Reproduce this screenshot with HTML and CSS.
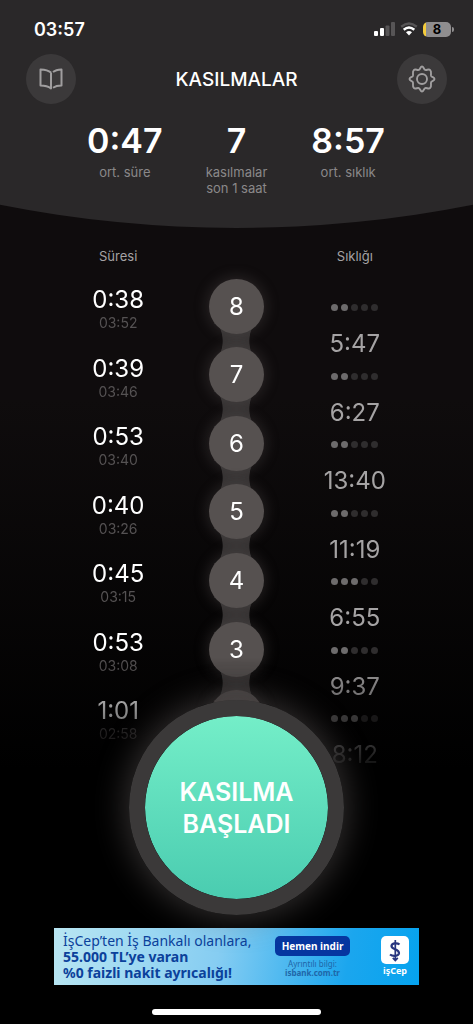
FILE: index.html
```
<!DOCTYPE html>
<html lang="tr">
<head>
<meta charset="utf-8">
<meta name="viewport" content="width=device-width, initial-scale=1">
<title>Kasılmalar</title>
<link rel="stylesheet" href="styles.css">
</head>
<body>
<div class="app">
  <header class="header">
    <div class="status">
      <time class="clock">03:57</time>
      <div class="status-icons">
        <svg class="signal" viewBox="0 0 21 14" aria-hidden="true">
          <rect x="0" y="9" width="4" height="5" rx="1" fill="#fff"/>
          <rect x="6" y="6" width="4" height="8" rx="1" fill="#fff"/>
          <rect x="11.500" y="3.500" width="4" height="10.500" rx="1" fill="#575556"/>
          <rect x="17" y="0" width="4" height="14" rx="1" fill="#575556"/>
        </svg>
        <svg class="wifi" viewBox="0 0 18 14" aria-hidden="true">
          <path d="M1.200 4.800Q9-1.600 16.800 4.800" fill="none" stroke="#575556" stroke-width="2.400"/>
          <path d="M3.700 7.700Q9 3.300 14.300 7.700" fill="none" stroke="#fff" stroke-width="2.500"/>
          <path d="M6 10.200Q9 7.800 12 10.200L9 13.400Z" fill="#fff"/>
        </svg>
        <div class="battery"><span class="battery-body">8</span><span class="battery-tip"></span></div>
      </div>
    </div>
    <div class="titlebar">
      <button class="round" aria-label="Rehber">
        <svg class="book" viewBox="0 0 24 22" fill="none" stroke="#a09e9f" stroke-width="2" stroke-linejoin="round" aria-hidden="true">
          <path d="M12 4.500C9.500 2.500 6 1.700 1.500 1.500V17.500C6 17.500 9.500 18.500 12 20.500V4.500"/>
          <path d="M14 4C16 2.400 19 1.700 22.500 1.500V17.500C19 17.500 16.500 18 14 19.800"/>
        </svg>
      </button>
      <h1 class="title">KASILMALAR</h1>
      <button class="round" aria-label="Ayarlar">
        <svg class="gear" viewBox="0 0 28 28" fill="none" stroke="#a09e9f" stroke-width="1.900" stroke-linejoin="round" aria-hidden="true">
          <path d="M14 1.500C15.600 1.500 15.800 4.300 17.200 4.900C18.700 5.500 20.800 3.400 22.200 5.200C23.900 6.900 22.500 8.900 23.100 10.800C23.700 12.300 26.500 12.300 26.500 14C26.500 15.700 23.700 15.700 23.100 17.200C22.500 19.100 23.900 21.100 22.200 22.800C20.800 24.600 18.700 22.500 17.200 23.100C15.800 23.700 15.600 26.500 14 26.500C12.400 26.500 12.200 23.700 10.800 23.100C9.300 22.500 7.200 24.600 5.800 22.800C4.100 21.100 5.500 19.100 4.900 17.200C4.300 15.700 1.500 15.700 1.500 14C1.500 12.300 4.300 12.300 4.900 10.800C5.500 8.900 4.100 6.900 5.800 5.200C7.200 3.400 9.300 5.500 10.800 4.900C12.200 4.300 12.400 1.500 14 1.500Z"/>
          <circle cx="14" cy="14" r="5"/>
        </svg>
      </button>
    </div>
    <dl class="stats">
      <div class="stat"><dd class="stat-value">0:47</dd><dt class="stat-label">ort. süre</dt></div>
      <div class="stat"><dd class="stat-value">7</dd><dt class="stat-label">kasılmalar<br>son 1 saat</dt></div>
      <div class="stat"><dd class="stat-value">8:57</dd><dt class="stat-label">ort. sıklık</dt></div>
    </dl>
  </header>

  <main class="main">
    <div class="heads"><h2 class="head">Süresi</h2><h2 class="head head-right">Sıklığı</h2></div>
    <div class="timeline">
      <ol class="list">
        <li class="duration"><span class="value">0:38</span><time class="at">03:52</time></li>
        <li class="duration"><span class="value">0:39</span><time class="at">03:46</time></li>
        <li class="duration"><span class="value">0:53</span><time class="at">03:40</time></li>
        <li class="duration"><span class="value">0:40</span><time class="at">03:26</time></li>
        <li class="duration"><span class="value">0:45</span><time class="at">03:15</time></li>
        <li class="duration"><span class="value">0:53</span><time class="at">03:08</time></li>
        <li class="duration"><span class="value">1:01</span><time class="at">02:58</time></li>
      </ol>
      <ol class="list beads">
        <li class="step"><span class="bead">8</span></li>
        <li class="step"><span class="bead">7</span></li>
        <li class="step"><span class="bead">6</span></li>
        <li class="step"><span class="bead">5</span></li>
        <li class="step"><span class="bead">4</span></li>
        <li class="step"><span class="bead">3</span></li>
        <li class="step"><span class="bead"></span></li>
      </ol>
      <ol class="list gaps">
        <li class="gap"><span class="dots"><i class="on"></i><i class="on"></i><i></i><i></i><i></i></span><span class="value">5:47</span></li>
        <li class="gap"><span class="dots"><i class="on"></i><i class="on"></i><i></i><i></i><i></i></span><span class="value">6:27</span></li>
        <li class="gap"><span class="dots"><i class="on"></i><i class="on"></i><i></i><i></i><i></i></span><span class="value">13:40</span></li>
        <li class="gap"><span class="dots"><i class="on"></i><i class="on"></i><i></i><i></i><i></i></span><span class="value">11:19</span></li>
        <li class="gap"><span class="dots"><i class="on"></i><i class="on"></i><i class="on"></i><i></i><i></i></span><span class="value">6:55</span></li>
        <li class="gap"><span class="dots"><i class="on"></i><i class="on"></i><i></i><i></i><i></i></span><span class="value">9:37</span></li>
        <li class="gap"><span class="dots"><i class="on"></i><i class="on"></i><i class="on"></i><i></i><i></i></span><span class="value">8:12</span></li>
      </ol>
    </div>
    <button class="start">KASILMA<br>BAŞLADI</button>
  </main>

  <footer class="footer">
    <aside class="ad">
      <p class="ad-copy">İşCep’ten İş Bankalı olanlara,<br><strong class="ad-strong">55.000 TL’ye varan<br>%0 faizli nakit ayrıcalığı!</strong></p>
      <div class="ad-action">
        <a class="ad-button" href="#indir">Hemen indir</a>
        <small class="ad-note">Ayrıntılı bilgi:<br><b>isbank.com.tr</b></small>
      </div>
      <div class="ad-brand">
        <svg class="ad-logo" viewBox="0 0 28 28" aria-hidden="true">
          <rect width="28" height="28" rx="5" fill="#fff"/>
          <path d="M18.500 8.500C16.500 6.800 11 6.800 10.500 9.800C10 13.500 18.500 13 18 17.200C17.500 20.500 11.500 20.500 9 18.500" fill="none" stroke="#28357f" stroke-width="2.200"/>
          <path d="M14.300 4V23.500M11.800 21.800L14.300 24.500L16.800 21.800" fill="none" stroke="#28357f" stroke-width="1.700"/>
        </svg>
        <span class="ad-name">işCep</span>
      </div>
    </aside>
    <div class="home"></div>
  </footer>
</div>
</body>
</html>
```
FILE: styles.css
```
* { box-sizing: border-box; margin: 0; padding: 0; }

body {
  background: #000;
  color: #fff;
  font-family: Inter, "Liberation Sans", sans-serif;
}

button { border: 0; font: inherit; color: inherit; cursor: pointer; }
ol { list-style: none; }

.app {
  min-height: 100vh;
  display: flex;
  flex-direction: column;
  overflow: hidden;
  background: linear-gradient(#0f0c0d 0, #0f0c0d 400px, #000 770px);
}

/* Header: its lower edge is a shallow arc */
.header {
  padding: 16px 26px 32px;
  background: #2a2829;
  clip-path: ellipse(258% 1222px at 50% calc(100% - 1222px));
}

.status {
  display: flex;
  justify-content: space-between;
  align-items: center;
  height: 26px;
  padding-left: 8px;
}
.clock { font-size: 18px; font-weight: 600; }
.status-icons { display: flex; align-items: center; gap: 5px; margin-right: -7px; }
.signal { width: 21px; height: 14px; }
.wifi { width: 18px; height: 14px; }
.battery { display: flex; align-items: center; gap: 1px; }
.battery-body {
  width: 28px;
  height: 15px;
  border-radius: 5px;
  background: linear-gradient(90deg, #f5cc3c 3px, #8f8d8e 3px);
  color: #000;
  font-size: 13px;
  font-weight: 700;
  line-height: 15px;
  text-align: center;
}
.battery-tip { width: 2px; height: 5px; border-radius: 0 2px 2px 0; background: #8f8d8e; }

.titlebar {
  display: flex;
  justify-content: space-between;
  align-items: center;
  margin-top: 12px;
}
.title { font-size: 19px; font-weight: 500; }
.round {
  width: 50px;
  height: 50px;
  display: grid;
  place-items: center;
  border-radius: 50%;
  background: #3b393a;
}
.book { width: 24px; height: 22px; }
.gear { width: 28px; height: 28px; }

.stats {
  display: grid;
  grid-template-columns: repeat(3, 1fr);
  margin: 16px 43px 0;
  text-align: center;
}
.stat { display: flex; flex-direction: column; }
.stat-value { font-size: 34px; font-weight: 600; line-height: 42px; }
.stat-label { color: #8a8889; font-size: 13px; line-height: 16px; margin-top: 2px; }

/* Timeline */
.main { flex: 1; display: flex; flex-direction: column; align-items: center; }
.heads {
  align-self: stretch;
  display: grid;
  grid-template-columns: repeat(3, 1fr);
  margin: 20px 59px 0;
  text-align: center;
}
.head { color: #a5a3a4; font-size: 13px; font-weight: 400; line-height: 16px; }
.head-right { grid-column: 3; }

.timeline {
  align-self: stretch;
  height: 516px;
  padding: 8px 59px 0;
  display: grid;
  grid-template-columns: repeat(3, 1fr);
  mask-image: linear-gradient(#000 393px, rgba(0, 0, 0, 0.55) 448px, rgba(0, 0, 0, 0.22) 490px, transparent 512px);
}
.list { display: grid; grid-template-rows: repeat(7, 1fr); height: 480px; }
.gaps { margin-top: 28px; }

.value { font-size: 24px; line-height: 30px; }
.duration { display: flex; flex-direction: column; align-items: center; padding-top: 13px; }
.at { color: #555253; font-size: 14px; line-height: 16px; }

.step { position: relative; display: grid; place-items: center; }
.bead {
  z-index: 1;
  width: 55px;
  height: 55px;
  border-radius: 50%;
  background: #565150;
  box-shadow: 0 0 14px 2px rgba(120, 112, 110, 0.25);
  font-size: 24px;
  line-height: 55px;
  text-align: center;
}
/* Waisted link laid behind the joint between two beads */
.step + .step::before {
  content: "";
  position: absolute;
  top: 0;
  left: 50%;
  width: 44px;
  height: 36px;
  transform: translate(-50%, -50%);
  background:
    radial-gradient(ellipse 9px 18px at 0 50%, transparent 92%, #343131) left / 50% 100% no-repeat,
    radial-gradient(ellipse 9px 18px at 100% 50%, transparent 92%, #343131) right / 50% 100% no-repeat;
}

.gap { display: flex; flex-direction: column; align-items: center; color: #a5a3a4; }
.dots { display: flex; gap: 3px; padding: 4px 0; }
.dots i { width: 7px; height: 7px; border-radius: 50%; background: #2f2d2e; }
.dots .on { background: #6d6b6c; }
.gap .value { margin-top: 14px; }

/* The button rides over the faded end of the timeline */
.start {
  position: relative;
  width: 215px;
  height: 215px;
  margin-top: -80px;
  border: 16px solid #3b3939;
  border-radius: 50%;
  background: linear-gradient(#74eec8, #4accb0) padding-box;
  box-shadow: 0 0 32px 4px rgba(110, 104, 104, 0.45);
  font-size: 25px;
  font-weight: 600;
  line-height: 32px;
}

/* Banner */
.footer { display: flex; flex-direction: column; align-items: center; padding: 13px 54px 9px; }
.ad {
  width: 100%;
  max-width: 480px;
  height: 57px;
  padding: 0 10px 0 9px;
  display: flex;
  align-items: center;
  background: linear-gradient(100deg, #b9e6f2, #86cdf2 45%, #1ba6ee 80%, #05a3ef);
  color: #0b419b;
  font-family: "Noto Sans", sans-serif;
}
.ad-copy { flex: 1; font-size: 14px; line-height: 16px; white-space: nowrap; }
.ad-strong { font-weight: 700; }
.ad-action { display: flex; flex-direction: column; align-items: center; margin-right: 31px; }
.ad-button {
  width: 75px;
  border-radius: 5px;
  background: #0636a0;
  color: #fff;
  font-size: 10px;
  font-weight: 700;
  line-height: 20px;
  text-align: center;
  text-decoration: none;
}
.ad-note { margin-top: 3px; color: #1f66a8; font-size: 8px; line-height: 9px; text-align: center; }
.ad-brand { display: flex; flex-direction: column; align-items: center; color: #fff; }
.ad-logo { width: 28px; height: 28px; }
.ad-name { font-size: 9px; font-weight: 700; line-height: 13px; }

.home { width: 169px; height: 6px; margin-top: 24px; border-radius: 3px; background: #fff; }
```
